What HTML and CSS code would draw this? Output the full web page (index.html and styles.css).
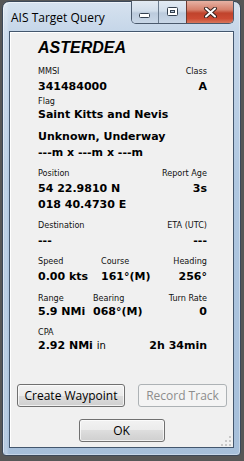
FILE: index.html
```html
<!DOCTYPE html>
<html>
<head>
<meta charset="utf-8">
<link rel="stylesheet" href="styles.css">
</head>
<body>
<div class="window">
  <div class="titlebar">
    <span class="title">AIS Target Query</span>
    <div class="caption-btns">
      <div class="cbtn cmin">
        <svg width="12" height="6" viewBox="0 0 12 6"><rect x="0.5" y="0.5" width="10" height="4" rx="1" fill="#fff" stroke="#34404f"/></svg>
      </div>
      <div class="cbtn cmax">
        <svg width="12" height="10" viewBox="0 0 12 10"><rect x="0.5" y="0.5" width="10" height="8" rx="1" fill="#fff" stroke="#34404f"/><rect x="3.5" y="3.5" width="4" height="2" fill="#b7c7da" stroke="#34404f"/></svg>
      </div>
      <div class="cbtn cclose">
        <svg width="13" height="11" viewBox="0 0 13 11"><path d="M2 1.5 L11 9.5 M11 1.5 L2 9.5" stroke="#3a2420" stroke-width="4" stroke-linecap="round"/><path d="M2 1.5 L11 9.5 M11 1.5 L2 9.5" stroke="#fff" stroke-width="2" stroke-linecap="round"/></svg>
      </div>
    </div>
  </div>
  <div class="client">
    <div class="info">
      <div class="name">ASTERDEA</div>

      <div class="row lbl g1"><span>MMSI</span><span>Class</span></div>
      <div class="row val v1"><span>341484000</span><span>A</span></div>

      <div class="row lbl g0"><span>Flag</span></div>
      <div class="row val v0"><span>Saint Kitts and Nevis</span></div>

      <div class="row val gs"><span>Unknown, Underway</span></div>
      <div class="row val v0"><span>---m x ---m x ---m</span></div>

      <div class="row lbl g6"><span>Position</span><span>Report Age</span></div>
      <div class="row val v1"><span>54 22.9810 N</span><span>3s</span></div>
      <div class="row val"><span>018 40.4730 E</span></div>

      <div class="row lbl g6"><span>Destination</span><span>ETA (UTC)</span></div>
      <div class="row val v1"><span>---</span><span>---</span></div>

      <div class="row lbl g6"><span class="c1 wa">Speed</span><span class="c2">Course</span><span class="c3">Heading</span></div>
      <div class="row val v1"><span class="c1 wa">0.00 kts</span><span class="c2">161°(M)</span><span class="c3">256°</span></div>

      <div class="row lbl g7"><span class="c1 wb">Range</span><span class="c2">Bearing</span><span class="c3">Turn Rate</span></div>
      <div class="row val v0"><span class="c1 wb">5.9 NMi</span><span class="c2">068°(M)</span><span class="c3">0</span></div>

      <div class="row lbl g6"><span>CPA</span></div>
      <div class="row val v0"><span>2.92 NMi <span class="thin">in</span></span><span>2h 34min</span></div>
    </div>

    <div class="btn-row">
      <div class="btn btn-wp">Create Waypoint</div>
      <div class="btn btn-track disabled">Record Track</div>
    </div>
    <div class="ok-row">
      <div class="btn btn-ok">OK</div>
    </div>
    <svg class="grip" width="12" height="10" viewBox="0 0 12 10">
      <rect x="9" y="0" width="2" height="2" fill="#c8c8c8"/>
      <rect x="5" y="4" width="2" height="2" fill="#c8c8c8"/>
      <rect x="9" y="4" width="2" height="2" fill="#c8c8c8"/>
      <rect x="1" y="8" width="2" height="2" fill="#c8c8c8"/>
      <rect x="5" y="8" width="2" height="2" fill="#c8c8c8"/>
      <rect x="9" y="8" width="2" height="2" fill="#c8c8c8"/>
    </svg>
  </div>
</div>
</body>
</html>
```

FILE: styles.css
```css
html, body {
  margin: 0;
  padding: 0;
}
body {
  width: 244px;
  height: 461px;
  overflow: hidden;
  background: #575757;
  font-family: "DejaVu Sans", sans-serif;
  color: #000;
}
.window {
  margin: 1px 0 0 2px;
  width: 239px;
  height: 455px;
  box-sizing: border-box;
  border: 1px solid #3b4859;
  border-radius: 7px 7px 4px 4px;
  background: linear-gradient(90deg, rgba(255,255,255,0) 0, rgba(255,255,255,.25) 3px, rgba(255,255,255,0) 6px),
              linear-gradient(180deg, #d6e2ef 0%, #c4d5e8 7%, #afc7e0 40%, #a6bfda 100%);
  box-shadow: inset 1px 1px 0 rgba(255,255,255,.55), inset -1px -1px 0 rgba(255,255,255,.35);
  display: flex;
  flex-direction: column;
}
.titlebar {
  height: 29px;
  display: flex;
  align-items: flex-start;
}
.title {
  font-family: "Open Sans", sans-serif;
  font-size: 12px;
  line-height: 16px;
  padding: 8px 0 0 8px;
  color: #000;
}
.caption-btns {
  margin-left: auto;
  margin-right: 6px;
  margin-top: -1px;
  display: flex;
  height: 22px;
  border: 1px solid #4a596c;
  border-top: none;
  border-radius: 0 0 5px 5px;
  overflow: hidden;
}
.cbtn {
  height: 22px;
  display: flex;
  align-items: center;
  justify-content: center;
  box-sizing: border-box;
}
.cmin {
  width: 27px;
  background: linear-gradient(180deg, #e2eaf3 0%, #d2deeb 45%, #bccbdd 55%, #c9d7e7 100%);
  border-right: 1px solid #6b7b8e;
  padding-top: 7px;
}
.cmax {
  width: 28px;
  background: linear-gradient(180deg, #e2eaf3 0%, #d2deeb 45%, #bccbdd 55%, #c9d7e7 100%);
  border-right: 1px solid #6d3a30;
}
.cclose {
  width: 46px;
  background: linear-gradient(180deg, #e6b2a4 0%, #d6806b 40%, #c0432c 55%, #cc4b33 80%, #d8765c 100%);
}
.client {
  margin: 0 6px;
  height: 417px;
  box-sizing: border-box;
  border: 1px solid #43566d;
  background: #f0f0f0;
  box-shadow: inset 1px 1px 0 #ffffff;
  position: relative;
  display: flex;
  flex-direction: column;
}
.info {
  padding: 7px 26px 0 28px;
}
.name {
  font-family: "Liberation Sans", Arial, sans-serif;
  font-weight: bold;
  font-style: italic;
  font-size: 16px;
  line-height: 18px;
}
.row {
  display: flex;
  justify-content: space-between;
}
.lbl {
  font-family: "DejaVu Sans Condensed", "DejaVu Sans", sans-serif;
  font-stretch: condensed;
  font-size: 9px;
  line-height: 12px;
  color: #111;
}
.val {
  font-weight: bold;
  font-size: 11px;
  line-height: 16px;
}
.g1 { margin-top: 8px; }
.g0 { margin-top: 0; }
.g6 { margin-top: 6px; }
.g7 { margin-top: 7px; }
.gs { margin-top: 6px; }
.v1 { margin-top: 2px; }
.v0 { margin-top: 0; }
.c1 { flex: none; }
.wa { width: 63px; }
.wb { width: 55px; }
.c2 { flex: none; }
.c3 { margin-left: auto; }
.thin {
  font-weight: normal;
  font-size: 10px;
}
.btn-row {
  margin-top: auto;
  display: flex;
  padding: 0 6px 0 7px;
  justify-content: space-between;
}
.btn {
  box-sizing: border-box;
  height: 23px;
  border: 1px solid #707070;
  border-radius: 3px;
  background: linear-gradient(180deg, #f2f2f2 0%, #ebebeb 50%, #dddddd 50%, #cfcfcf 100%);
  box-shadow: inset 0 0 0 1px rgba(255,255,255,.7);
  font-family: "Open Sans", sans-serif;
  font-size: 12px;
  line-height: 21px;
  text-align: center;
  color: #000;
}
.btn-wp { width: 108px; }
.btn-track { width: 89px; }
.disabled {
  border-color: #adb2b5;
  background: #f4f4f4;
  box-shadow: none;
  color: #8d8d8d;
}
.ok-row {
  display: flex;
  justify-content: center;
  margin-top: 12px;
  padding-bottom: 5px;
}
.btn-ok { width: 86px; }
.grip {
  position: absolute;
  right: 1px;
  bottom: 1px;
}
```
